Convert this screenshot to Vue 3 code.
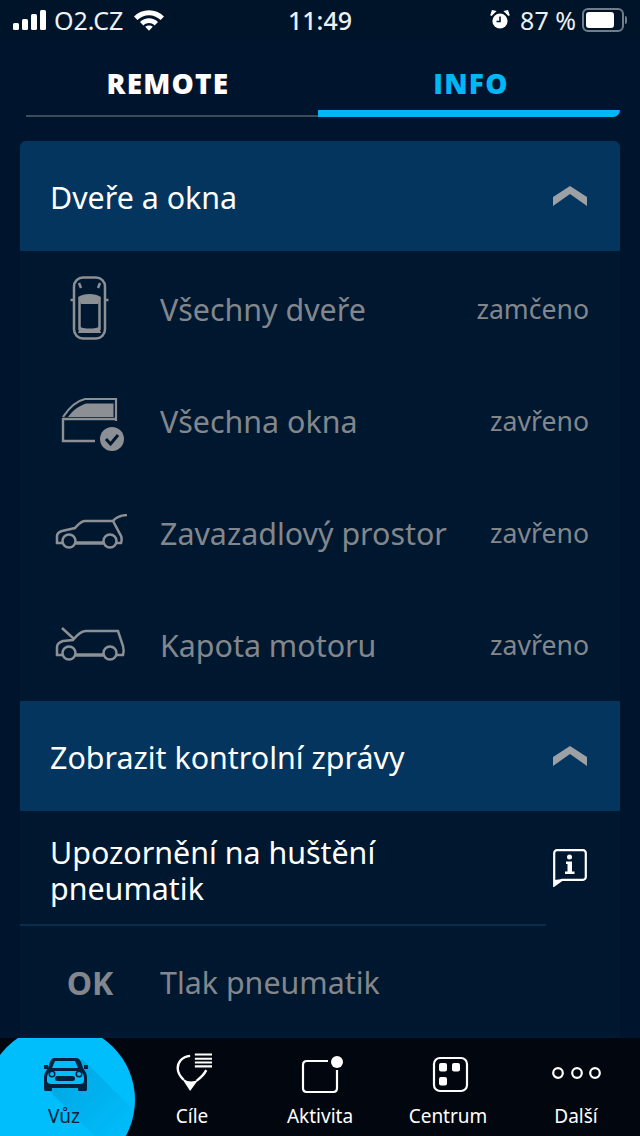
<template>
  <div class="screen">
    <header class="status">
      <div class="status-left">
        <svg width="34" height="20" viewBox="0 0 34 20" class="signal">
          <rect x="0" y="13" width="6" height="7" rx="1.5" />
          <rect x="9" y="9" width="6" height="11" rx="1.5" />
          <rect x="18" y="4" width="6" height="16" rx="1.5" />
          <rect x="27" y="0" width="6" height="20" rx="1.5" />
        </svg>
        <span>O2.CZ</span>
        <svg width="30" height="22" viewBox="0 0 30 22" class="wifi">
          <path d="M0 7.5C8 -1 22 -1 30 7.5L26.6 11C19.8 4.6 10.2 4.6 3.4 11Z" />
          <path d="M6 13C11.2 8 18.8 8 24 13L20.6 16.4C17 13.2 13 13.2 9.4 16.4Z" />
          <path d="M11.2 17.8C13.4 16 16.6 16 18.8 17.8L15 21.8Z" />
        </svg>
      </div>
      <div class="clock">11:49</div>
      <div class="status-right">
        <svg width="20" height="20" viewBox="0 0 20 20" class="alarm">
          <circle cx="10" cy="11" r="7.6" fill="#fff" />
          <path d="M10 6.5V11.5H6.5" fill="none" stroke="#001429" stroke-width="1.6" />
          <path d="M1 5.5L5 1.5L2.5 1ZM19 5.5L15 1.5L17.5 1Z" stroke="#fff" stroke-width="1.6" fill="#fff" />
        </svg>
        <span>87 %</span>
        <div class="battery"><div class="battery-fill"></div></div>
        <div class="battery-tip"></div>
      </div>
    </header>

    <nav class="tabs">
      <div class="tab">REMOTE</div>
      <div class="tab active">INFO</div>
    </nav>
    <div class="tab-line">
      <div class="line-left"></div>
      <div class="line-right"></div>
    </div>

    <main class="content">
      <section class="panel-head first">
        <h2>Dveře a okna</h2>
        <svg class="chevron" width="36" height="20" viewBox="0 0 36 20">
          <path d="M1 11L18 0L35 11V20L18 8L1 20Z" />
        </svg>
      </section>

      <div class="status-list">
        <div v-for="row in rows" :key="row.label" class="status-row">
          <div class="row-icon">
            <svg v-if="row.icon === 'doors'" width="40" height="64" viewBox="0 0 40 64" fill="none" stroke="#8c8f93" stroke-width="2.5">
              <rect x="5" y="1.5" width="31" height="61" rx="9" />
              <path d="M5 24H1.5M36 24H39.5M10.5 22V54M30.5 22V54" />
              <path d="M9 21C15 17 26 17 32 21L29 28H12Z" fill="#8c8f93" stroke="none" />
              <path d="M11 51C17 53 24 53 30 51L32 57H9Z" fill="#8c8f93" stroke="none" />
              <path d="M10 7L12 12M31 7L29 12" />
            </svg>
            <svg v-else-if="row.icon === 'windows'" class="window-icon" width="70" height="60" viewBox="0 0 70 60" fill="none">
              <path d="M9 27C15 18 22 11 31 9H62V31" stroke="#8c8f93" stroke-width="2.2" />
              <path d="M14 27C19 20 25 16 32 13.500H59.500V27Z" fill="#8c8f93" />
              <path d="M9 29H61M9 28V51H41" stroke="#8c8f93" stroke-width="2.4" />
              <circle cx="58" cy="49" r="12" fill="#8c8f93" />
              <path d="M52 49L56.500 54L64 45" stroke="#001730" stroke-width="3" />
            </svg>
            <svg v-else-if="row.icon === 'trunk'" width="76" height="36" viewBox="0 0 76 36" fill="none" stroke="#8c8f93" stroke-width="2.500">
              <path d="M12 29H6V22C6 19 8 18 11 17L24 14C28 10 30 7 34 7H62L69 20C71 23 71 26 70 29H66" />
              <path d="M25 29H52" stroke-width="3.500" />
              <circle cx="18" cy="27" r="6.500" />
              <circle cx="59" cy="27" r="6.500" />
              <path d="M62 7C65 3 69 1.500 76 1" />
            </svg>
            <svg v-else width="76" height="36" viewBox="0 0 76 36" fill="none" stroke="#8c8f93" stroke-width="2.500">
              <path d="M12 29H6V21C6 18 9 16 12 15L22 14C26 9 30 5 35 5H67L72 20C73 24 73 26 72 29H65" />
              <path d="M25 29H52" stroke-width="3.500" />
              <circle cx="18" cy="27" r="6.500" />
              <circle cx="59" cy="27" r="6.500" />
              <path d="M11 2L23 13" />
            </svg>
          </div>
          <div class="row-label">{{ row.label }}</div>
          <div class="row-value">{{ row.value }}</div>
        </div>
      </div>

      <section class="panel-head second">
        <h2>Zobrazit kontrolní zprávy</h2>
        <svg class="chevron" width="36" height="20" viewBox="0 0 36 20">
          <path d="M1 11L18 0L35 11V20L18 8L1 20Z" />
        </svg>
      </section>

      <div class="message">
        <div class="message-text">Upozornění na huštění<br />pneumatik</div>
        <svg class="message-icon" width="34" height="38" viewBox="0 0 34 38" fill="none">
          <path d="M4 1.200H30C31.500 1.200 32.800 2.500 32.800 4V28C32.800 29.500 31.500 30.800 30 30.800H9L1.200 36.500V4C1.200 2.500 2.500 1.200 4 1.200Z" stroke="#fff" stroke-width="2.200" />
          <path d="M1 31V37L10 30Z" fill="#fff" />
          <circle cx="16.500" cy="8" r="2.500" fill="#fff" />
          <path d="M13 12.500H19V22.500H21.500V25H12V22.500H14.500V15H13Z" fill="#fff" />
        </svg>
      </div>
      <div class="divider-row"><div class="divider"></div></div>
      <div class="ok-row">
        <div class="ok">OK</div>
        <div class="ok-label">Tlak pneumatik</div>
      </div>
    </main>

    <footer class="bottom">
      <div class="active-bubble">
        <div class="car-shadow"></div>
      </div>
      <div class="nav-item current">
        <svg class="car" width="46" height="40" viewBox="0 0 46 40">
          <path d="M1 12H5V16H1ZM41 12H45V16H41Z" fill="#00213f" />
          <path d="M11 5H33C36 5 37 7 38 9L40 15C42 18 44 20 44 25V36C44 38 43 38 42 38H36C35 38 35 37 35 35H9C9 37 9 38 8 38H3C2 38 1 38 1 36V25C1 20 3 18 5 15L7 9C8 7 9 5 11 5Z" fill="#00213f" />
          <path d="M12 8H32L35 15H9Z" fill="#00bdfb" />
          <path d="M8 18H37C40 20 41 22 41 25V28C41 30 39 31 37 31H8C6 31 4 30 4 28V25C4 22 5 20 8 18Z" fill="#00bdfb" />
          <rect x="12" y="23" width="20" height="5" rx="2.500" fill="#00213f" />
          <circle cx="9" cy="21" r="3.500" fill="#00213f" />
          <circle cx="36" cy="21" r="3.500" fill="#00213f" />
          <circle cx="9" cy="21" r="2" fill="#00bdfb" />
          <circle cx="36" cy="21" r="2" fill="#00bdfb" />
        </svg>
        <span>Vůz</span>
      </div>
      <div class="nav-item">
        <svg width="46" height="40" viewBox="0 0 46 42" class="pin" fill="none">
          <path d="M21 3C12 4 8 10 8 16C8 21 10 24 14 28M28 29C32 26 36 22 38 18" stroke="#fff" stroke-width="2.500" />
          <path d="M12 26L21 40L30 27.500Q21 33 12 26Z" fill="#fff" />
          <path d="M26 1.500H44M26 6H44M26 10H44M26 14H44" stroke="#fff" stroke-width="2.200" />
        </svg>
        <span>Cíle</span>
      </div>
      <div class="nav-item">
        <svg width="46" height="40" viewBox="0 0 46 40" fill="none">
          <path d="M31 8H10C7.500 8 6 9.500 6 12V35C6 37.500 7.500 39 10 39H36C38.500 39 40 37.500 40 35V17" stroke="#fff" stroke-width="2.200" />
          <circle cx="40" cy="9" r="6" fill="#fff" />
        </svg>
        <span>Aktivita</span>
      </div>
      <div class="nav-item">
        <svg width="46" height="40" viewBox="0 0 46 40" fill="none">
          <rect x="9" y="5" width="33" height="33" rx="6" stroke="#fff" stroke-width="2.200" />
          <rect x="14" y="10" width="8" height="8.500" rx="2" fill="#fff" />
          <rect x="27" y="10" width="8" height="8.500" rx="2" fill="#fff" />
          <rect x="14" y="24" width="8" height="8.500" rx="2" fill="#fff" />
        </svg>
        <span>Centrum</span>
      </div>
      <div class="nav-item">
        <svg width="50" height="40" viewBox="0 0 50 40" fill="none" stroke="#fff" stroke-width="2.200">
          <circle cx="7" cy="20" r="4.800" />
          <circle cx="26" cy="20" r="4.800" />
          <circle cx="44" cy="20" r="4.800" />
        </svg>
        <span>Další</span>
      </div>
    </footer>
  </div>
</template>

<script setup>
const rows = [
  { icon: 'doors', label: 'Všechny dveře', value: 'zamčeno' },
  { icon: 'windows', label: 'Všechna okna', value: 'zavřeno' },
  { icon: 'trunk', label: 'Zavazadlový prostor', value: 'zavřeno' },
  { icon: 'hood', label: 'Kapota motoru', value: 'zavřeno' },
];
</script>

<style>
html,
body {
  margin: 0;
  background: #001429;
}
</style>

<style scoped>
.screen {
  width: 640px;
  height: 1136px;
  display: flex;
  flex-direction: column;
  overflow: hidden;
  background: #00152d;
  color: #fff;
  font-family: "Noto Sans", "Open Sans", sans-serif;
}

.status {
  height: 40px;
  flex: none;
  display: grid;
  grid-template-columns: 1fr auto 1fr;
  align-items: center;
  padding: 0 13px;
  background: #001429;
  font-size: 25px;
  color: #eef0f3;
}

.status-left,
.status-right {
  display: flex;
  align-items: center;
}

.status-left span {
  margin: 0 11px 0 7px;
}

.signal,
.wifi {
  fill: #fff;
}

.clock {
  font-weight: 500;
}

.status-right {
  justify-content: flex-end;
}

.status-right span {
  margin: 0 6px 0 10px;
}

.battery {
  box-sizing: content-box;
  width: 34px;
  height: 16px;
  padding: 2px;
  border: 2px solid #727d89;
  border-radius: 6px;
}

.battery-fill {
  width: 28px;
  height: 16px;
  border-radius: 3px;
  background: #fff;
}

.battery-tip {
  width: 2px;
  height: 8px;
  margin-left: 1px;
  background: #727d89;
  border-radius: 0 2px 2px 0;
}

.tabs {
  height: 70px;
  flex: none;
  display: grid;
  grid-template-columns: 296px 310px;
  padding: 0 14px 0 20px;
  align-items: center;
  text-align: center;
  font-size: 28px;
  font-weight: 800;
  letter-spacing: 1.2px;
  font-family: "Open Sans", "Noto Sans", sans-serif;
}

.tab {
  padding-top: 15px;
}

.tab.active {
  color: #00b7f5;
}

.tab-line {
  height: 7px;
  flex: none;
  display: flex;
  align-items: flex-end;
  padding: 0 20px 0 26px;
}

.line-left {
  width: 292px;
  height: 2px;
  background: #3d4a58;
}

.line-right {
  flex: 1;
  height: 7px;
  background: #00b7f5;
  border-bottom-right-radius: 12px;
}

.content {
  flex: 1;
  min-height: 0;
  padding: 24px 20px 0;
}

.panel-head {
  height: 110px;
  display: flex;
  align-items: center;
  justify-content: space-between;
  padding: 0 32px 0 30px;
  background: #03355e;
}

.panel-head.first {
  border-radius: 6px 6px 0 0;
}

.panel-head h2 {
  margin: 0;
  padding-top: 2px;
  font-size: 30.4px;
  font-weight: 400;
  color: #fff;
}

.chevron {
  fill: #9da0a4;
}

.status-list {
  height: 450px;
  display: flex;
  flex-direction: column;
  justify-content: center;
  background: #001730;
}

.status-row {
  height: 112px;
  flex: none;
  display: flex;
  align-items: center;
  color: #83878c;
}

.row-icon {
  width: 140px;
  flex: none;
  display: flex;
  justify-content: center;
  padding-right: 2px;
  box-sizing: border-box;
}

.window-icon {
  overflow: visible;
}

.row-label {
  flex: 1;
  padding-top: 2px;
  font-size: 30.4px;
}

.row-value {
  padding: 2px 31px 0 0;
  font-size: 26.6px;
}

.message {
  box-sizing: border-box;
  height: 113px;
  display: flex;
  align-items: center;
  justify-content: space-between;
  padding: 6px 33px 0 30px;
  background: #001730;
}

.message-text {
  font-size: 30.4px;
  line-height: 36px;
}

.message-icon {
  margin-top: -6px;
}

.divider-row {
  background: #001730;
}

.divider {
  width: 526px;
  height: 2px;
  background: #0a2c4d;
}

.ok-row {
  box-sizing: border-box;
  height: 116px;
  padding-bottom: 4px;
  display: flex;
  align-items: center;
  color: #83878c;
  background: linear-gradient(to bottom, #001730 92%, #001c38);
}

.ok {
  width: 140px;
  text-align: center;
  font-size: 32px;
  font-weight: 700;
}

.ok-label {
  font-size: 30.4px;
}

.bottom {
  position: relative;
  height: 98px;
  flex: none;
  display: grid;
  grid-template-columns: repeat(5, 128px);
  overflow: hidden;
  background: #02060f;
}

.active-bubble {
  position: absolute;
  left: -15px;
  top: -13px;
  width: 150px;
  height: 150px;
  overflow: hidden;
  border-radius: 50%;
  background: #00bdfb;
}

.car-shadow {
  position: absolute;
  left: 81px;
  top: 27px;
  width: 90px;
  height: 46px;
  transform-origin: left center;
  transform: rotate(45deg);
  background: linear-gradient(to right, rgba(0, 50, 100, 0.14), rgba(0, 50, 100, 0));
}

.nav-item {
  position: relative;
  display: flex;
  flex-direction: column;
  align-items: center;
  padding-top: 15px;
  box-sizing: border-box;
  font-size: 19px;
}

.nav-item span {
  margin-top: 10px;
}

.nav-item.current {
  color: #00213f;
}

.car {
  margin-left: 4px;
}

.pin {
  overflow: visible;
}
</style>
